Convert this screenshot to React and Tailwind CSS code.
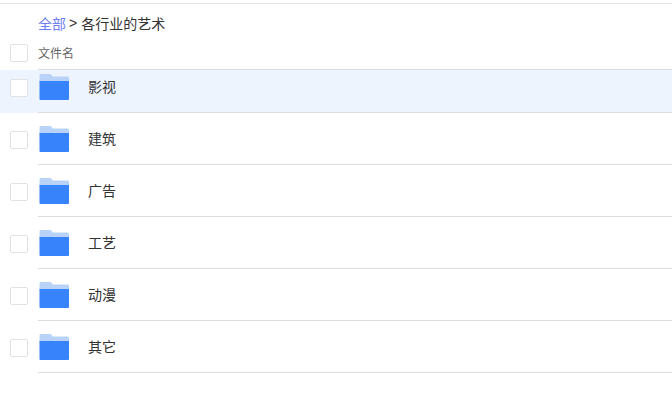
const rows = ["影视", "建筑", "广告", "工艺", "动漫", "其它"];

function Check() {
  return <span className="block w-[18px] h-[18px] shrink-0 rounded-[2px] border border-[#e2e2e2] bg-white" />;
}

function Folder() {
  return (
    <svg width="31" height="27" viewBox="0 0 31 27" className="shrink-0 block">
      <path d="M1.5 2.4C1.5 1.6 2 1 2.8 1H12C12.7 1 13.3 1.3 13.7 1.9L14.8 3.6H29.6C30.4 3.6 31 4.2 31 5V10H1.5Z" fill="#b9d3f8" />
      <path d="M1.5 8H31V25.8C31 26.6 30.6 27 29.8 27H2.6C1.9 27 1.5 26.6 1.5 25.8Z" fill="#3683fb" />
    </svg>
  );
}

export default function App() {
  return (
    <div className="w-[672px] h-[408px] bg-white overflow-hidden font-['Noto_Sans_CJK_SC','Liberation_Sans',sans-serif] text-[#333]">
      <div className="mt-[3px] border-t border-[#e2e2e2] h-[2px]" />
      <div className="pl-[38px] h-[28px] flex items-center leading-none text-[#333] mt-[4px]">
        <span className="text-[#6d7ef2] text-[14px]">全部</span>
        <span className="ml-[3px] mr-[4px] font-['Liberation_Sans'] text-[14px]">&gt;</span>
        <span className="text-[14px]">各行业的艺术</span>
      </div>
      <div className="flex items-center h-[33px]">
        <div className="w-[38px] pl-[10px] pb-[1px] shrink-0"><Check /></div>
        <div className="flex-1 h-full flex items-center border-b border-[#dcdcdc] text-[12px] text-[#666]">文件名</div>
      </div>
      {rows.map((name, i) => (
        <div key={name} className={i === 0 ? "flex h-[43px] bg-[#edf4fe]" : "flex h-[52px] bg-white"}>
          <div className={i === 0 ? "w-[38px] pl-[10px] shrink-0 flex items-center pb-[7px]" : "w-[38px] pl-[10px] shrink-0 flex items-center pt-[2px]"}><Check /></div>
          <div className={i === 0 ? "flex-1 flex items-center border-b border-[#dcdcdc] pb-[9px]" : "flex-1 flex items-center border-b border-[#dcdcdc]"}>
            <Folder />
            <span className="ml-[19px] -mt-[2px] text-[14px] leading-none text-[#333]">{name}</span>
          </div>
        </div>
      ))}
    </div>
  );
}
